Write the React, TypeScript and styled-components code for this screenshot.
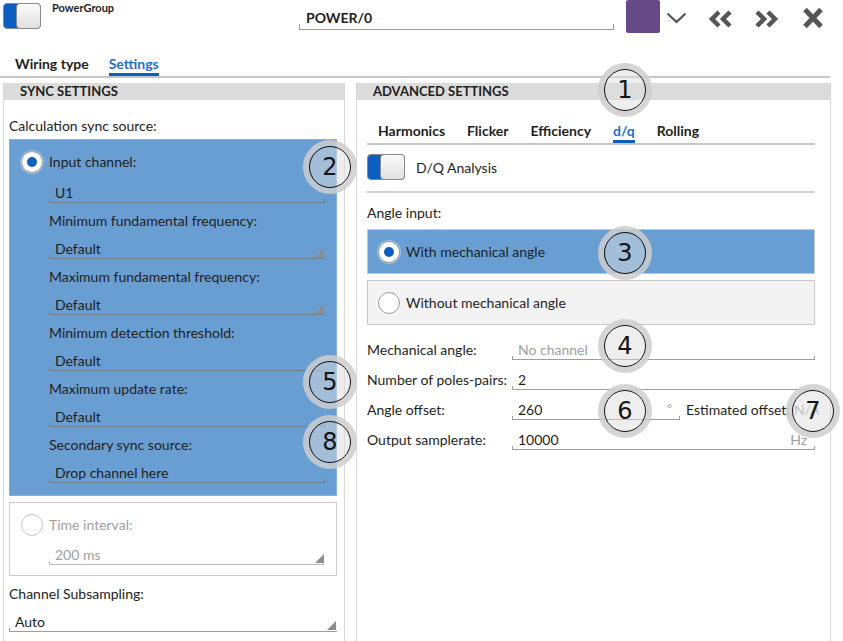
import React from 'react';
import styled, { createGlobalStyle } from 'styled-components';

const GlobalStyle = createGlobalStyle`
  html, body { margin: 0; padding: 0; background: #ffffff; }
  body { font-family: Lato, "Open Sans", "Noto Sans", sans-serif; color: #222; }
  * { box-sizing: border-box; }
`;

const BLUE_BOX = '#699ed3';
const ACCENT = '#0b5fc1';

const Page = styled.div`
  position: relative;
  width: 843px;
  height: 641px;
  overflow: hidden;
  background: #fff;
`;

/* ---------- top bar ---------- */
const TopBar = styled.div`
  display: flex;
  align-items: flex-start;
  height: 48px;
  padding: 3px 0 0 3px;
`;

const Toggle = styled.div`
  display: flex;
  flex: none;
  width: 38px;
  height: 26px;
  border-radius: 4px;
  background: ${ACCENT};
  border: 1px solid #7f8a96;
`;

const ToggleKnob = styled.div`
  margin: -1px -1px -1px auto;
  width: 25px;
  border-radius: 4px;
  border: 1px solid #8a8a8a;
  background: linear-gradient(#fbfbfb, #e0e0e0);
`;

const GroupName = styled.div`
  width: 247px;
  margin-left: 11px;
  margin-top: -2px;
  font-size: 11px;
  line-height: 13px;
  font-weight: 700;
  color: #1e1e1e;
`;

const TitleField = styled.div`
  position: relative;
  width: 315px;
  height: 30px;
  margin-top: -3px;
  display: flex;
  align-items: flex-end;
  padding: 0 0 3px 7px;
  border-bottom: 1px solid #9a9a9a;
  font-size: 14px;
  line-height: 16px;
  font-weight: 700;
  color: #1e1e1e;
  &::before, &::after {
    content: '';
    position: absolute;
    bottom: -1px;
    width: 1px;
    height: 6px;
    background: #9a9a9a;
  }
  &::before { left: 0; }
  &::after { right: 0; }
`;

const Swatch = styled.div`
  width: 34px;
  height: 33px;
  margin: -3px 0 0 12px;
  border-radius: 2px;
  background: #654a87;
`;

const IconSlot = styled.div<{ $ml: number; $mt: number }>`
  display: flex;
  margin-left: ${p => p.$ml}px;
  margin-top: ${p => p.$mt}px;
`;

/* ---------- tabs ---------- */
const TabsRow = styled.div<{ $pl: number; $gap: number; $mt?: number }>`
  display: flex;
  gap: ${p => p.$gap}px;
  margin-top: ${p => p.$mt ?? 0}px;
  padding-left: ${p => p.$pl}px;
  border-bottom: 2px solid #c6c6c6;
`;

const MainTabs = styled(TabsRow)`
  width: 830px;
  height: 30px;
`;

const Tab = styled.div<{ $active?: boolean; $pt: number }>`
  padding-top: ${p => p.$pt}px;
  font-size: 14px;
  line-height: 18px;
  font-weight: 700;
  color: ${p => (p.$active ? '#1f6fc4' : '#1e1e1e')};
  border-bottom: 3px solid ${p => (p.$active ? '#0d5fbb' : 'transparent')};
`;

/* ---------- panels ---------- */
const Content = styled.div`
  display: flex;
  padding: 5px 0 0 3px;
  height: 563px;
`;

const Panel = styled.div<{ $w: number; $ml?: number }>`
  width: ${p => p.$w}px;
  margin-left: ${p => p.$ml ?? 0}px;
  border-left: 1px solid #d8d8d8;
  border-right: 1px solid #d8d8d8;
  display: flex;
  flex-direction: column;
`;

const PanelHeader = styled.div`
  height: 17px;
  background: #dcdcdc;
  padding-left: 16px;
  font-size: 13px;
  line-height: 17px;
  font-weight: 700;
  color: #222;
`;

const PanelBody = styled.div<{ $pl: number; $pr: number }>`
  display: flex;
  flex-direction: column;
  padding: 0 ${p => p.$pr}px 0 ${p => p.$pl}px;
`;

const Caption = styled.div<{ $mt: number; $mb?: number; $muted?: boolean }>`
  margin-top: ${p => p.$mt}px;
  margin-bottom: ${p => p.$mb ?? 0}px;
  font-size: 14px;
  line-height: 18px;
  color: ${p => (p.$muted ? '#9d9d9d' : '#222')};
`;

const OptionGroup = styled.div<{ $selected?: boolean; $mt: number }>`
  margin-top: ${p => p.$mt}px;
  padding: 11px 11px ${p => (p.$selected ? 12 : 10)}px 11px;
  background: ${p => (p.$selected ? BLUE_BOX : '#fff')};
  border: 1px solid ${p => (p.$selected ? '#86afd9' : '#cdcdcd')};
  display: flex;
  flex-direction: column;
`;

const RadioRow = styled.div`
  display: flex;
  align-items: center;
  gap: 6px;
  height: 22px;
`;

const Radio = styled.div<{ $checked?: boolean; $disabled?: boolean }>`
  flex: none;
  width: 22px;
  height: 22px;
  border-radius: 50%;
  background: #fff;
  border: 1px solid ${p => (p.$disabled ? '#c6c6c6' : '#9b9b9b')};
  box-shadow: 0 0 0 1px rgba(255, 255, 255, 0.35);
  display: flex;
  align-items: center;
  justify-content: center;
  &::after {
    content: '';
    display: ${p => (p.$checked ? 'block' : 'none')};
    width: 10px;
    height: 10px;
    border-radius: 50%;
    background: ${ACCENT};
  }
`;

const RadioText = styled.span<{ $muted?: boolean }>`
  font-size: 14px;
  line-height: 18px;
  color: ${p => (p.$muted ? '#a0a0a0' : '#1e1e1e')};
`;

const Indented = styled.div`
  display: flex;
  flex-direction: column;
  margin-left: 28px;
`;

const Field = styled.div<{ $arrow?: boolean; $line?: string; $muted?: boolean; $mt?: number; $w?: number }>`
  position: relative;
  display: flex;
  align-items: flex-end;
  height: 24px;
  margin-top: ${p => p.$mt ?? 0}px;
  ${p => (p.$w ? `width: ${p.$w}px; flex: none;` : 'flex: 1 1 auto; min-width: 0;')}
  padding: 0 8px 1px 6px;
  border-bottom: 1px solid ${p => p.$line ?? '#9d9d9d'};
  font-size: 14px;
  line-height: 16px;
  color: ${p => (p.$muted ? '#a0a0a0' : '#1e1e1e')};
  &::before {
    content: '';
    position: absolute;
    left: 0;
    bottom: -1px;
    width: 1px;
    height: 4px;
    background: ${p => p.$line ?? '#9d9d9d'};
  }
  &::after {
    content: '';
    position: absolute;
    right: ${p => (p.$arrow ? 1 : 0)}px;
    bottom: ${p => (p.$arrow ? 1 : -1)}px;
    width: ${p => (p.$arrow ? 9 : 1)}px;
    height: ${p => (p.$arrow ? 9 : 4)}px;
    background: ${p => (p.$arrow ? '#8d8d8d' : p.$line ?? '#9d9d9d')};
    clip-path: ${p => (p.$arrow ? 'polygon(100% 0, 100% 100%, 0 100%)' : 'none')};
  }
`;

const FieldLabel = styled.div`
  margin: 9px 0 5px;
  font-size: 14px;
  line-height: 18px;
  color: #1e1e1e;
`;

const Unit = styled.span<{ $raised?: boolean }>`
  margin-left: auto;
  align-self: ${p => (p.$raised ? 'flex-start' : 'flex-end')};
  margin-top: ${p => (p.$raised ? 5 : 0)}px;
  font-size: ${p => (p.$raised ? 12 : 14)}px;
  color: #9d9d9d;
`;

/* ---------- right panel parts ---------- */
const SwitchRow = styled.div`
  display: flex;
  align-items: center;
  gap: 11px;
  margin-top: 9px;
  font-size: 14px;
  color: #1e1e1e;
`;

const Divider = styled.div`
  margin-top: 11px;
  height: 2px;
  background: #d0d0d0;
`;

const ChoiceBox = styled.div<{ $selected?: boolean; $mt: number }>`
  margin-top: ${p => p.$mt}px;
  height: 45px;
  display: flex;
  align-items: center;
  gap: 6px;
  padding-left: 10px;
  background: ${p => (p.$selected ? BLUE_BOX : '#f3f3f3')};
  border: 1px solid #c9c9c9;
`;

const FormRow = styled.div<{ $mt: number }>`
  display: flex;
  align-items: flex-end;
  margin-top: ${p => p.$mt}px;
  height: 24px;
`;

const RowLabel = styled.div<{ $w?: number; $ml?: number; $muted?: boolean }>`
  ${p => (p.$w ? `width: ${p.$w}px;` : '')}
  flex: none;
  margin-left: ${p => p.$ml ?? 0}px;
  padding-bottom: 2px;
  font-size: 14px;
  line-height: 16px;
  white-space: nowrap;
  color: ${p => (p.$muted ? '#a8a8a8' : '#1e1e1e')};
`;

/* ---------- annotation markers ---------- */
const Marker = styled.div<{ $x: number; $y: number }>`
  position: absolute;
  left: ${p => p.$x - 27}px;
  top: ${p => p.$y - 27}px;
  width: 54px;
  height: 54px;
  border-radius: 50%;
  border: 6px solid rgba(206, 206, 206, 0.85);
`;

const MarkerFace = styled.div`
  width: 100%;
  height: 100%;
  border-radius: 50%;
  border: 1.5px solid #141414;
  background: rgba(222, 222, 222, 0.5);
  display: flex;
  align-items: center;
  justify-content: center;
  font-family: "DejaVu Sans", Verdana, sans-serif;
  font-size: 24px;
  line-height: 1;
  color: #141414;
`;

const markers: { n: number; x: number; y: number }[] = [
  { n: 1, x: 625, y: 90 },
  { n: 2, x: 330, y: 167 },
  { n: 3, x: 625, y: 253 },
  { n: 4, x: 625, y: 346 },
  { n: 5, x: 330, y: 382 },
  { n: 6, x: 625, y: 411 },
  { n: 7, x: 813, y: 411 },
  { n: 8, x: 330, y: 442 },
];

const syncFields: { label: string; value: string; arrow: boolean }[] = [
  { label: 'Minimum fundamental frequency:', value: 'Default', arrow: true },
  { label: 'Maximum fundamental frequency:', value: 'Default', arrow: true },
  { label: 'Minimum detection threshold:', value: 'Default', arrow: false },
  { label: 'Maximum update rate:', value: 'Default', arrow: false },
  { label: 'Secondary sync source:', value: 'Drop channel here', arrow: false },
];

const BLUE_LINE = '#6f7f90';

const ChevronDown = () => (
  <svg width="21" height="12" viewBox="0 0 21 12">
    <polyline points="1.5,1.5 10.5,10 19.5,1.5" fill="none" stroke="#555" strokeWidth="2.2" />
  </svg>
);

const DoubleLeft = () => (
  <svg width="25" height="18" viewBox="0 0 25 18">
    <polyline points="11,2 4,9 11,16" fill="none" stroke="#555" strokeWidth="4.5" />
    <polyline points="22,2 15,9 22,16" fill="none" stroke="#555" strokeWidth="4.5" />
  </svg>
);

const DoubleRight = () => (
  <svg width="25" height="18" viewBox="0 0 25 18">
    <polyline points="3,2 10,9 3,16" fill="none" stroke="#555" strokeWidth="4.5" />
    <polyline points="14,2 21,9 14,16" fill="none" stroke="#555" strokeWidth="4.5" />
  </svg>
);

const CloseX = () => (
  <svg width="22" height="20" viewBox="0 0 22 20">
    <line x1="3" y1="1.5" x2="19" y2="18.5" stroke="#555" strokeWidth="5" />
    <line x1="19" y1="1.5" x2="3" y2="18.5" stroke="#555" strokeWidth="5" />
  </svg>
);

export default function App() {
  return (
    <Page>
      <GlobalStyle />
      <TopBar>
        <Toggle>
          <ToggleKnob />
        </Toggle>
        <GroupName>PowerGroup</GroupName>
        <TitleField>POWER/0</TitleField>
        <Swatch />
        <IconSlot $ml={6} $mt={9}>
          <ChevronDown />
        </IconSlot>
        <IconSlot $ml={21} $mt={7}>
          <DoubleLeft />
        </IconSlot>
        <IconSlot $ml={21} $mt={7}>
          <DoubleRight />
        </IconSlot>
        <IconSlot $ml={23} $mt={5}>
          <CloseX />
        </IconSlot>
      </TopBar>

      <MainTabs $pl={15} $gap={20}>
        <Tab $pt={7}>Wiring type</Tab>
        <Tab $pt={7} $active>
          Settings
        </Tab>
      </MainTabs>

      <Content>
        <Panel $w={342}>
          <PanelHeader>SYNC SETTINGS</PanelHeader>
          <PanelBody $pl={5} $pr={7}>
            <Caption $mt={17}>Calculation sync source:</Caption>
            <OptionGroup $selected $mt={4}>
              <RadioRow>
                <Radio $checked />
                <RadioText>Input channel:</RadioText>
              </RadioRow>
              <Indented>
                <Field $line={BLUE_LINE} $mt={6}>
                  U1
                </Field>
                {syncFields.map(f => (
                  <React.Fragment key={f.label}>
                    <FieldLabel>{f.label}</FieldLabel>
                    <Field $line={BLUE_LINE} $arrow={f.arrow}>
                      {f.value}
                    </Field>
                  </React.Fragment>
                ))}
              </Indented>
            </OptionGroup>
            <OptionGroup $mt={6}>
              <RadioRow>
                <Radio $disabled />
                <RadioText $muted>Time interval:</RadioText>
              </RadioRow>
              <Indented>
                <Field $mt={5} $arrow $muted $line="#bdbdbd">
                  200 ms
                </Field>
              </Indented>
            </OptionGroup>
            <Caption $mt={9}>Channel Subsampling:</Caption>
            <Field $mt={5} $arrow>
              Auto
            </Field>
          </PanelBody>
        </Panel>

        <Panel $w={475} $ml={11}>
          <PanelHeader>ADVANCED SETTINGS</PanelHeader>
          <PanelBody $pl={10} $pr={15}>
            <TabsRow $pl={11} $gap={22} $mt={17}>
              <Tab $pt={5}>Harmonics</Tab>
              <Tab $pt={5}>Flicker</Tab>
              <Tab $pt={5}>Efficiency</Tab>
              <Tab $pt={5} $active>
                d/q
              </Tab>
              <Tab $pt={5}>Rolling</Tab>
            </TabsRow>
            <SwitchRow>
              <Toggle>
                <ToggleKnob />
              </Toggle>
              D/Q Analysis
            </SwitchRow>
            <Divider />
            <Caption $mt={11}>Angle input:</Caption>
            <ChoiceBox $selected $mt={7}>
              <Radio $checked />
              <RadioText>With mechanical angle</RadioText>
            </ChoiceBox>
            <ChoiceBox $mt={6}>
              <Radio />
              <RadioText>Without mechanical angle</RadioText>
            </ChoiceBox>
            <FormRow $mt={11}>
              <RowLabel $w={145}>Mechanical angle:</RowLabel>
              <Field $muted>No channel</Field>
            </FormRow>
            <FormRow $mt={6}>
              <RowLabel $w={145}>Number of poles-pairs:</RowLabel>
              <Field>2</Field>
            </FormRow>
            <FormRow $mt={6}>
              <RowLabel $w={145}>Angle offset:</RowLabel>
              <Field $w={168}>
                260
                <Unit $raised>°</Unit>
              </Field>
              <RowLabel $ml={6}>Estimated offset:</RowLabel>
              <RowLabel $ml={4} $muted>
                N/A
              </RowLabel>
            </FormRow>
            <FormRow $mt={6}>
              <RowLabel $w={145}>Output samplerate:</RowLabel>
              <Field>
                10000
                <Unit>Hz</Unit>
              </Field>
            </FormRow>
          </PanelBody>
        </Panel>
      </Content>

      {markers.map(m => (
        <Marker key={m.n} $x={m.x} $y={m.y}>
          <MarkerFace>{m.n}</MarkerFace>
        </Marker>
      ))}
    </Page>
  );
}
